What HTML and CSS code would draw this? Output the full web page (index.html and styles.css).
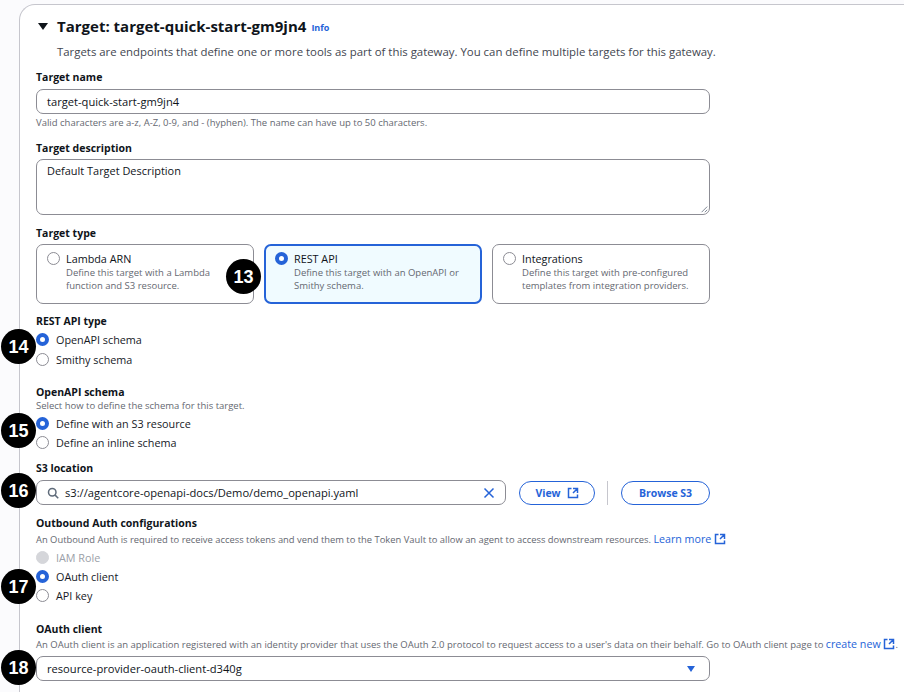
FILE: index.html
```html
<!DOCTYPE html>
<html lang="en">
<head>
<meta charset="utf-8">
<title>Target</title>
<link rel="stylesheet" href="styles.css">
</head>
<body>
<main class="card">
  <header class="head">
    <span class="caret"></span>
    <h2>Target: target-quick-start-gm9jn4</h2>
    <a class="info">Info</a>
  </header>
  <p class="intro">Targets are endpoints that define one or more tools as part of this gateway. You can define multiple targets for this gateway.</p>

  <div class="label l-name">Target name</div>
  <div class="input wide">target-quick-start-gm9jn4</div>
  <p class="hint h-name">Valid characters are a-z, A-Z, 0-9, and - (hyphen). The name can have up to 50 characters.</p>

  <div class="label l-desc">Target description</div>
  <div class="textarea wide">Default Target Description
    <svg class="grip" viewBox="0 0 10 10"><path d="M9 2 2 9M9 6 6 9"/></svg>
  </div>

  <div class="label l-type">Target type</div>
  <div class="tiles">
    <div class="tile">
      <span class="radio"></span>
      <div><div class="tile-title">Lambda ARN</div><div class="tile-text">Define this target with a Lambda function and S3 resource.</div></div>
    </div>
    <div class="tile selected">
      <span class="radio on"></span>
      <div><div class="tile-title">REST API</div><div class="tile-text">Define this target with an OpenAPI or Smithy schema.</div></div>
    </div>
    <div class="tile">
      <span class="radio"></span>
      <div><div class="tile-title">Integrations</div><div class="tile-text">Define this target with pre-configured templates from integration providers.</div></div>
    </div>
  </div>

  <div class="label l-rest">REST API type</div>
  <div class="options o-rest">
    <div class="option"><span class="radio on"></span>OpenAPI schema</div>
    <div class="option"><span class="radio"></span>Smithy schema</div>
  </div>

  <div class="label l-open">OpenAPI schema</div>
  <p class="hint">Select how to define the schema for this target.</p>
  <div class="options o-open">
    <div class="option"><span class="radio on"></span>Define with an S3 resource</div>
    <div class="option"><span class="radio"></span>Define an inline schema</div>
  </div>

  <div class="label l-s3">S3 location</div>
  <div class="s3-row">
    <div class="input search">
      <svg class="icon gray" viewBox="0 0 16 16"><circle cx="7" cy="7" r="5"/><path d="m15 15-4.5-4.5"/></svg>
      <span class="grow">s3://agentcore-openapi-docs/Demo/demo_openapi.yaml</span>
      <svg class="icon blue" viewBox="0 0 16 16"><path d="m2 2 12 12M14 2 2 14"/></svg>
    </div>
    <a class="btn b-view">View
      <svg class="icon blue" viewBox="0 0 16 16"><path d="M14 8V2H8M14 2 8 8M6 2H2v12h12v-4"/></svg>
    </a>
    <span class="divider"></span>
    <a class="btn b-browse">Browse S3</a>
  </div>

  <div class="label l-out">Outbound Auth configurations</div>
  <p class="hint h-out">An Outbound Auth is required to receive access tokens and vend them to the Token Vault to allow an agent to access downstream resources. <a class="link">Learn more <svg class="icon blue" viewBox="0 0 16 16"><path d="M14 8V2H8M14 2 8 8M6 2H2v12h12v-4"/></svg></a></p>
  <div class="options o-out">
    <div class="option disabled"><span class="radio off"></span>IAM Role</div>
    <div class="option"><span class="radio on"></span>OAuth client</div>
    <div class="option"><span class="radio"></span>API key</div>
  </div>

  <div class="label l-oauth">OAuth client</div>
  <p class="hint h-oauth">An OAuth client is an application registered with an identity provider that uses the OAuth 2.0 protocol to request access to a user's data on their behalf. Go to OAuth client page to <a class="link">create new <svg class="icon blue" viewBox="0 0 16 16"><path d="M14 8V2H8M14 2 8 8M6 2H2v12h12v-4"/></svg></a>.</p>
  <div class="input wide select"><span class="grow">resource-provider-oauth-client-d340g</span><span class="arrow"></span></div>
</main>

<span class="badge b13">13</span>
<span class="badge b14">14</span>
<span class="badge b15">15</span>
<span class="badge b16">16</span>
<span class="badge b17">17</span>
<span class="badge b18">18</span>
</body>
</html>
```

FILE: styles.css
```css
* { box-sizing: border-box; }
html, body { margin: 0; height: 692px; overflow: hidden; }
body {
  position: relative;
  background: #fbfbfd;
  font-family: "Open Sans", "Noto Sans", sans-serif;
  font-size: 11px;
  line-height: 14px;
  color: #16191f;
}
p { margin: 0; }
.card {
  margin: 4px 0 0 19px;
  height: 700px;
  padding: 0 0 0 16px;
  background: #fff;
  border: 1px solid #c6c6cd;
  border-right: 0;
  border-bottom: 0;
  border-radius: 16px 0 0 0;
}
.head { display: flex; align-items: center; height: 22px; margin-top: 10px; }
.caret {
  width: 0; height: 0; margin: 0 9px 0 2px;
  border-left: 5px solid transparent;
  border-right: 5px solid transparent;
  border-top: 7px solid #0f141a;
}
h2 { margin: 0; font-size: 15px; line-height: 22px; font-weight: 700; color: #0f141a; }
.info { margin: 3px 0 0 5px; font-size: 9px; font-weight: 700; color: #2563d8; }
.intro { margin: 8px 0 0 21px; font-size: 11.4px; color: #424650; }
.label { font-size: 10.5px; font-weight: 700; line-height: 14px; color: #0f141a; }
.hint { font-size: 9.5px; line-height: 13px; color: #656871; }
.l-name { margin-top: 11px; }
.input {
  display: flex; align-items: center; height: 25px; padding: 0 10px;
  border: 1px solid #8c8c94; border-radius: 7px; background: #fff;
  font-size: 11.15px; color: #0f141a;
}
.wide { width: 674px; }
.l-name + .input { margin-top: 5px; }
.h-name { margin-top: 2px; }
.l-desc { margin-top: 12px; }
.textarea {
  position: relative; height: 56px; margin-top: 4px; padding: 4px 10px;
  border: 1px solid #8c8c94; border-radius: 7px; font-size: 10.95px; color: #0f141a;
}
.grip { position: absolute; right: 1px; bottom: 1px; width: 8px; height: 8px; fill: none; stroke: #5f6b7a; stroke-width: 1; }
.l-type { margin-top: 11px; }
.tiles { display: grid; grid-template-columns: repeat(3, 218px); gap: 10px; margin-top: 4px; }
.tile {
  display: flex; gap: 6px; height: 60px; padding: 7px 10px;
  border: 1px solid #8c8c94; border-radius: 7px;
}
.tile.selected { background: #f0fbff; border: 2px solid #2563d8; padding: 6px 9px; }
.tile-title { font-size: 10.8px; line-height: 14px; color: #0f141a; }
.tile-text { font-size: 9.5px; line-height: 13px; color: #656871; }
.radio {
  flex: none; width: 13px; height: 13px; border-radius: 50%;
  border: 1px solid #8c8c94; background: #fff;
}
.radio.on { border: 4px solid #2563d8; }
.radio.off { background: #d5d6da; border-color: #d5d6da; }
.l-rest { margin-top: 10px; }
.options { display: flex; flex-direction: column; }
.option { display: flex; align-items: center; gap: 7px; height: 19px; font-size: 10.8px; color: #16191f; }
.disabled { color: #9ba0a8; }
.o-rest { margin-top: 2px; gap: 1px; }
.l-open { margin-top: 16px; }
.o-open { margin-top: 2px; }
.l-s3 { margin-top: 9px; }
.s3-row { display: flex; align-items: center; margin-top: 5px; }
.search { width: 470px; gap: 6px; }
.grow { flex: 1; }
.icon { width: 12px; height: 12px; fill: none; stroke-width: 2; flex: none; }
.gray { stroke: #5f6b7a; }
.blue { stroke: #2563d8; }
.btn {
  display: flex; align-items: center; justify-content: center; gap: 6px;
  height: 24px; border: 1px solid #2563d8; border-radius: 12px;
  font-size: 10.5px; font-weight: 700; color: #2563d8;
}
.b-view { width: 76px; margin-left: 13px; }
.divider { width: 1px; height: 24px; margin: 0 13px 0 12px; background: #c6c6cd; }
.b-browse { width: 89px; }
.l-out { margin-top: 11px; }
.h-out { margin-top: 3px; font-size: 9.4px; }
.link { font-size: 10.7px; color: #2563d8; }
.link .icon { vertical-align: -2px; }
.o-out { margin-top: 2px; }
.l-oauth { margin-top: 17px; }
.h-oauth { margin-top: 2px; }
.select { margin-top: 5px; }
.arrow { margin-right: 4px; border-left: 4px solid transparent; border-right: 4px solid transparent; border-top: 6px solid #2563d8; }
.badge {
  position: absolute; width: 35px; height: 35px; border-radius: 50%;
  display: flex; align-items: center; justify-content: center;
  background: #000; color: #fff;
  font-family: "Liberation Sans", sans-serif; font-size: 18px; font-weight: 700;
}
.b13 { left: 226px; top: 259px; }
.b14 { left: 1px; top: 329px; }
.b15 { left: 1px; top: 413px; }
.b16 { left: 1px; top: 473px; }
.b17 { left: 1px; top: 569px; }
.b18 { left: 1px; top: 650px; }
```
